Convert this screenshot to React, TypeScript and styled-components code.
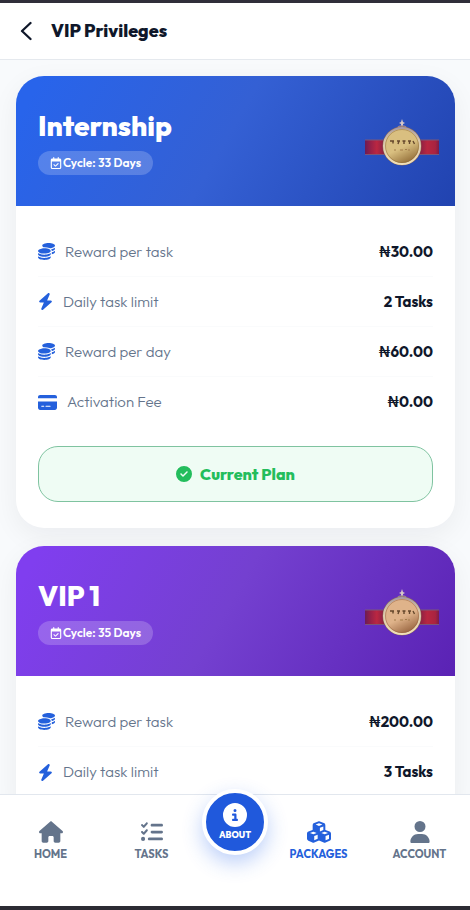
import React, { useId } from "react";
import styled, { createGlobalStyle } from "styled-components";
import type { IconType } from "react-icons";
import {
  FaBolt,
  FaCircleCheck,
  FaCircleInfo,
  FaCoins,
  FaCreditCard,
  FaCubes,
  FaHouse,
  FaListCheck,
  FaRegCalendarCheck,
  FaUser,
} from "react-icons/fa6";

const GlobalStyle = createGlobalStyle`
  *, *::before, *::after { box-sizing: border-box; }
  body {
    margin: 0;
    background: #f8fafc;
    color: #0f172a;
    font-family: Outfit, Lato, "Noto Sans", sans-serif;
  }
  button { font-family: inherit; }
`;

const Screen = styled.div`
  display: flex;
  flex-direction: column;
  height: 100vh;
  border-top: 3px solid #302f3a;
  border-bottom: 4px solid #2c2b33;
`;

const TopBar = styled.header`
  display: flex;
  align-items: center;
  gap: 15px;
  flex: none;
  height: 57px;
  padding: 0 16px;
  background: #fff;
  border-bottom: 1px solid #e5e9ee;
`;

const BackButton = styled.button`
  display: grid;
  place-items: center;
  width: 20px;
  height: 32px;
  padding: 0;
  border: 0;
  background: none;
  color: #0f172a;
  cursor: pointer;
`;

const PageTitle = styled.h1`
  margin: 0;
  font-size: 18px;
  line-height: 24px;
  font-weight: 800;
`;

const Plans = styled.main`
  display: flex;
  flex: 1;
  flex-direction: column;
  gap: 18px;
  min-height: 0;
  padding: 16px 15px 48px 16px;
  overflow-y: auto;
  scrollbar-width: none;
`;

const Card = styled.article`
  flex: none;
  overflow: hidden;
  border-radius: 28px;
  background: #fff;
  box-shadow: 0 8px 28px rgba(15, 23, 42, 0.06);
`;

const CardHead = styled.header<{ $from: string; $mid: string; $to: string }>`
  display: flex;
  align-items: center;
  justify-content: space-between;
  height: 130px;
  padding: 0 14px 0 22px;
  color: #fff;
  background: linear-gradient(120deg, ${(p) => p.$from} 5%, ${(p) => p.$mid} 48%, ${(p) => p.$to});
`;

const PlanName = styled.h2`
  margin: 0 0 7px;
  font-size: 28px;
  line-height: 36px;
  font-weight: 800;
`;

const Cycle = styled.span`
  display: inline-flex;
  align-items: center;
  gap: 1px;
  height: 24px;
  padding: 0 12px;
  border-radius: 12px;
  background: rgba(255, 255, 255, 0.2);
  font-size: 12px;
  font-weight: 600;
`;

const MedalArt = styled.svg`
  display: block;
  width: 78px;
  height: 70px;
`;

const CardBody = styled.div`
  padding: 21px 22px 26px;
`;

const Facts = styled.dl`
  margin: 0;
`;

const Fact = styled.div`
  display: flex;
  align-items: center;
  justify-content: space-between;
  height: 50px;
  border-bottom: 1px solid #fafbfc;

  &:last-child { border-bottom: 0; }
`;

const FactLabel = styled.dt<{ $iconWidth: number }>`
  display: flex;
  align-items: center;
  gap: 10px;
  color: #64748b;
  font-size: 15px;
  line-height: 20px;
  font-weight: 300;

  svg {
    flex: none;
    width: ${(p) => p.$iconWidth}px;
    height: 17px;
    color: #2460dc;
  }
`;

const FactValue = styled.dd`
  margin: 0;
  font-size: 15px;
  line-height: 20px;
  font-weight: 700;
`;

const PlanButton = styled.button`
  display: flex;
  align-items: center;
  justify-content: center;
  gap: 8px;
  width: 100%;
  height: 56px;
  margin-top: 19px;
  border: 1px solid #7fc3a0;
  border-radius: 20px;
  background: #effcf4;
  color: #23bd5c;
  font-size: 16px;
  font-weight: 800;
`;

const NavBar = styled.nav`
  display: grid;
  grid-template-columns: 1fr 1fr 66px 1fr 1fr;
  flex: none;
  position: relative;
  height: 112px;
  background: #fff;
  border-top: 1px solid #e2e7ee;
`;

const NavLink = styled.a<{ $active?: boolean }>`
  display: flex;
  flex-direction: column;
  align-items: center;
  gap: 4px;
  padding-top: 26px;
  color: ${(p) => (p.$active ? "#2460dc" : "#64748b")};
  font-size: 11px;
  line-height: 14px;
  font-weight: 700;
  text-decoration: none;

  svg {
    width: 24px;
    height: 22px;
  }
`;

const AboutLink = styled.a`
  display: flex;
  flex-direction: column;
  align-items: center;
  justify-content: center;
  gap: 2px;
  width: 66px;
  height: 66px;
  margin-top: -6px;
  border: 4px solid #fff;
  border-radius: 50%;
  background: #2059dc;
  color: #fff;
  box-shadow: 0 8px 20px rgba(37, 99, 235, 0.3);
  font-size: 9px;
  line-height: 12px;
  font-weight: 800;
  text-decoration: none;

  svg { font-size: 24px; }
`;

function Medal({ light, deep }: { light: string; deep: string }) {
  const id = useId().replace(/[^a-zA-Z0-9]/g, "");
  return (
    <MedalArt viewBox="0 -12 78 70" role="img" aria-label="VIP medal">
      <defs>
        <linearGradient id={`r${id}`} x1="0" x2="1" y1="0" y2="0">
          <stop offset="0" stopColor="#6c1c55" />
          <stop offset=".06" stopColor="#8f1f4a" />
          <stop offset=".16" stopColor="#bb2741" />
          <stop offset=".28" stopColor="#7e1f45" />
          <stop offset=".72" stopColor="#7e1f45" />
          <stop offset=".84" stopColor="#b82740" />
          <stop offset=".95" stopColor="#a92340" />
          <stop offset="1" stopColor="#7a1c48" />
        </linearGradient>
        <linearGradient id={`g${id}`} x1=".2" x2=".7" y1="0" y2="1">
          <stop offset="0" stopColor={light} />
          <stop offset=".55" stopColor={light} />
          <stop offset="1" stopColor={deep} />
        </linearGradient>
        <linearGradient id={`e${id}`} x1="0" x2="0" y1="0" y2="1">
          <stop offset="0" stopColor="#a89ba6" />
          <stop offset=".35" stopColor="#d8c6aa" />
          <stop offset="1" stopColor="#f0dfb8" />
        </linearGradient>
      </defs>
      <path d="M2 22h74v14H2z" fill={`url(#r${id})`} />
      <path d="M2 22h74M2 36.5h74" stroke="#7c5678" strokeWidth="1" />
      <path d="M39 1l1 3 2 1-2 1v3h-2V6l-2-1 2-1z" fill="#d6c8c8" />
      <path d="M35 9q4-2 8 0" fill="none" stroke="#9d8c9c" strokeWidth="1.5" />
      <circle cx="39" cy="28" r="19.5" fill="#8d6a55" />
      <circle cx="39" cy="28" r="18" fill={`url(#g${id})`} stroke={`url(#e${id})`} strokeWidth="2" />
      <circle cx="39" cy="28" r="16.5" fill="none" stroke={deep} strokeWidth=".8" opacity=".6" />
      <path
        d="M27 23h4M30 23v2.5M34 23h3M36 23l-1 3M39.500 23h3M41 23v3M45 23h3M46.500 23v3M50 23l1.500 3"
        fill="none"
        stroke="#65482c"
        strokeWidth="1.4"
      />
      <path d="M31 32h2M37 32h3M42 31.500h2M45 32h2" stroke="#a17c4b" strokeWidth="1.2" />
    </MedalArt>
  );
}

type FactKind = "taskReward" | "taskLimit" | "dayReward" | "fee";

const factKinds: Record<FactKind, { Icon: IconType; iconWidth: number; label: string }> = {
  taskReward: { Icon: FaCoins, iconWidth: 17, label: "Reward per task" },
  taskLimit: { Icon: FaBolt, iconWidth: 15, label: "Daily task limit" },
  dayReward: { Icon: FaCoins, iconWidth: 17, label: "Reward per day" },
  fee: { Icon: FaCreditCard, iconWidth: 19, label: "Activation Fee" },
};

type Plan = {
  name: string;
  days: number;
  colors: [string, string, string];
  medal: [string, string];
  facts: [FactKind, string][];
  current?: boolean;
};

const plans: Plan[] = [
  {
    name: "Internship",
    days: 33,
    colors: ["#2864eb", "#3460d4", "#2143b0"],
    medal: ["#d9bf80", "#8e6934"],
    facts: [
      ["taskReward", "₦30.00"],
      ["taskLimit", "2 Tasks"],
      ["dayReward", "₦60.00"],
      ["fee", "₦0.00"],
    ],
    current: true,
  },
  {
    name: "VIP 1",
    days: 35,
    colors: ["#803eef", "#7440d0", "#5a22b4"],
    medal: ["#dfb38a", "#935f3b"],
    facts: [
      ["taskReward", "₦200.00"],
      ["taskLimit", "3 Tasks"],
    ],
  },
];

function PlanCard({ plan }: { plan: Plan }) {
  const [from, mid, to] = plan.colors;
  return (
    <Card>
      <CardHead $from={from} $mid={mid} $to={to}>
        <div>
          <PlanName>{plan.name}</PlanName>
          <Cycle>
            <FaRegCalendarCheck />
            Cycle: {plan.days} Days
          </Cycle>
        </div>
        <Medal light={plan.medal[0]} deep={plan.medal[1]} />
      </CardHead>
      <CardBody>
        <Facts>
          {plan.facts.map(([kind, value]) => {
            const { Icon, iconWidth, label } = factKinds[kind];
            return (
              <Fact key={kind}>
                <FactLabel $iconWidth={iconWidth}>
                  <Icon />
                  {label}
                </FactLabel>
                <FactValue>{value}</FactValue>
              </Fact>
            );
          })}
        </Facts>
        {plan.current && (
          <PlanButton type="button">
            <FaCircleCheck />
            Current Plan
          </PlanButton>
        )}
      </CardBody>
    </Card>
  );
}

export default function App() {
  return (
    <>
      <GlobalStyle />
      <Screen>
        <TopBar>
          <BackButton type="button" aria-label="Back">
            <svg width="12" height="20" viewBox="0 0 12 20" fill="none" aria-hidden="true">
              <path
                d="M10.500 2L2 10l8.500 8"
                stroke="currentColor"
                strokeWidth="2.3"
                strokeLinecap="round"
                strokeLinejoin="round"
              />
            </svg>
          </BackButton>
          <PageTitle>VIP Privileges</PageTitle>
        </TopBar>
        <Plans>
          {plans.map((plan) => (
            <PlanCard key={plan.name} plan={plan} />
          ))}
        </Plans>
        <NavBar aria-label="Main">
          <NavLink href="#home">
            <FaHouse />
            HOME
          </NavLink>
          <NavLink href="#tasks">
            <FaListCheck />
            TASKS
          </NavLink>
          <AboutLink href="#about">
            <FaCircleInfo />
            ABOUT
          </AboutLink>
          <NavLink href="#packages" $active aria-current="page">
            <FaCubes />
            PACKAGES
          </NavLink>
          <NavLink href="#account">
            <FaUser />
            ACCOUNT
          </NavLink>
        </NavBar>
      </Screen>
    </>
  );
}
